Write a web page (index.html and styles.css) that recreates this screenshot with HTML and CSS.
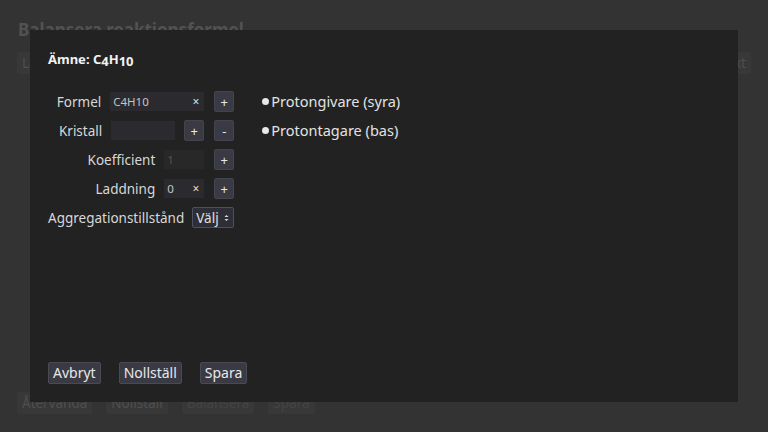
FILE: index.html
```html
<!DOCTYPE html>
<html lang="sv">
<head>
<meta charset="utf-8">
<title>Balansera reaktionsformel</title>
<link rel="stylesheet" href="styles.css">
</head>
<body>
<div class="page">
  <h1 class="page-title">Balansera reaktionsformel</h1>
  <div class="page-toolbar">
    <span class="bg-btn">Lägg till</span>
    <span class="bg-btn right">Text</span>
  </div>
  <div class="page-spacer"></div>
  <div class="page-actions">
    <span class="bg-btn">Återvända</span>
    <span class="bg-btn">Nollställ</span>
    <span class="bg-btn faint">Balansera</span>
    <span class="bg-btn faint">Spara</span>
  </div>
</div>

<div class="modal">
  <h2 class="modal-title">Ämne: C<span class="sub">4</span>H<span class="sub">10</span></h2>
  <div class="modal-body">
    <div class="form">
      <div class="row">
        <label>Formel</label>
        <div class="field w94"><span class="val">C4H10</span><span class="clear">×</span></div>
        <button class="sq">+</button>
      </div>
      <div class="row">
        <label>Kristall</label>
        <div class="field w64"></div>
        <button class="sq">+</button>
        <button class="sq">-</button>
      </div>
      <div class="row">
        <label>Koefficient</label>
        <div class="field w40 disabled"><span class="val">1</span></div>
        <button class="sq">+</button>
      </div>
      <div class="row">
        <label>Laddning</label>
        <div class="field w40"><span class="val">0</span><span class="clear">×</span></div>
        <button class="sq">+</button>
      </div>
      <div class="row">
        <label>Aggregationstillstånd</label>
        <div class="select"><span>Välj</span><svg width="5" height="8" viewBox="0 0 5 8"><path d="M0.5 3 L2.5 1 L4.5 3 Z M0.5 5 L2.5 7 L4.5 5 Z" fill="#ddd"/></svg></div>
      </div>
    </div>
    <ul class="options">
      <li>Protongivare (syra)</li>
      <li>Protontagare (bas)</li>
    </ul>
  </div>
  <div class="modal-actions">
    <button class="btn">Avbryt</button>
    <button class="btn">Nollställ</button>
    <button class="btn">Spara</button>
  </div>
</div>
</body>
</html>
```
FILE: styles.css
```css
* { box-sizing: border-box; }
html, body { margin: 0; padding: 0; }
body {
  width: 768px;
  height: 432px;
  background: #333333;
  font-family: "Noto Sans", "DejaVu Sans", sans-serif;
  overflow: hidden;
  position: relative;
}
.page {
  padding: 18px 17px 0 17px;
  height: 432px;
  display: flex;
  flex-direction: column;
}
.page-title {
  margin: 0;
  font-size: 17px;
  font-weight: 700;
  color: #525252;
  line-height: 24px;
  padding-left: 1px;
}
.page-toolbar {
  margin-top: 10px;
  display: flex;
  justify-content: space-between;
}
.bg-btn {
  background: #383838;
  color: #4f4f4f;
  font-size: 13.5px;
  line-height: 22px;
  padding: 0 5px;
  border-radius: 2px;
}
.bg-btn.faint { color: #444; }
.page-spacer { flex: 1; }
.page-actions {
  display: flex;
  gap: 14px;
  margin-bottom: 18px;
}
.modal {
  position: absolute;
  left: 30px;
  top: 30px;
  width: 708px;
  height: 372px;
  background: #222222;
  padding: 20px 18px 18px 18px;
  display: flex;
  flex-direction: column;
  color: #e6e6e6;
}
.modal-title {
  margin: 0;
  font-size: 13px;
  font-weight: 700;
  line-height: 18px;
  color: #f2f2f2;
}
.sub { position: relative; top: 2px; }
.modal-body {
  margin-top: 23px;
  display: flex;
  align-items: flex-start;
  flex: 1;
}
.form {
  display: flex;
  flex-direction: column;
  align-items: flex-end;
  gap: 8px;
}
.row {
  display: flex;
  align-items: center;
  height: 21px;
}
.row label {
  font-size: 13.5px;
  color: #d8d8d8;
  margin-right: 9px;
}
.field {
  height: 19px;
  background: #2b2b2f;
  display: flex;
  align-items: center;
  justify-content: space-between;
  padding: 0 3px 0 3px;
  margin-right: 10px;
  font-size: 11.5px;
  color: #c4c4c4;
}
.w94 { width: 94px; }
.w64 { width: 64px; margin-right: 9px; }
.w40 { width: 40px; }
.field.disabled { background: #282828; color: #555; }
.clear { font-size: 12px; color: #ddd; padding-right: 2px; }
.sq {
  width: 20px;
  height: 21px;
  background: #3a3a44;
  border: 1px solid #44444f;
  border-radius: 2px;
  color: #e8e8e8;
  font-family: inherit;
  font-size: 13px;
  padding: 0;
  line-height: 18px;
}
.sq + .sq { margin-left: 10px; }
.select {
  margin-left: -1px;
  width: 42px;
  height: 21px;
  background: #2e2e36;
  border: 1px solid #4a5262;
  border-radius: 2px;
  display: flex;
  align-items: center;
  justify-content: space-between;
  padding: 0 4px 0 2px;
  font-size: 13.5px;
  color: #e0e0e0;
}
.select span { padding-left: 1px; }
.options {
  list-style: none;
  margin: 0 0 0 28px;
  padding: 0;
  display: flex;
  flex-direction: column;
  gap: 9px;
}
.options li {
  font-size: 14.5px;
  color: #e2e2e2;
  line-height: 20px;
  display: flex;
  align-items: center;
}
.options li::before {
  content: "";
  width: 7px;
  height: 7px;
  border-radius: 50%;
  background: #e8e8e8;
  margin-right: 2px;
}
.modal-actions {
  display: flex;
  gap: 18px;
}
.btn {
  height: 22px;
  background: #3a3a44;
  border: 1px solid #4a4a55;
  border-radius: 2px;
  color: #e8e8e8;
  font-family: inherit;
  font-size: 14px;
  padding: 0 4px;
  line-height: 20px;
}
```
